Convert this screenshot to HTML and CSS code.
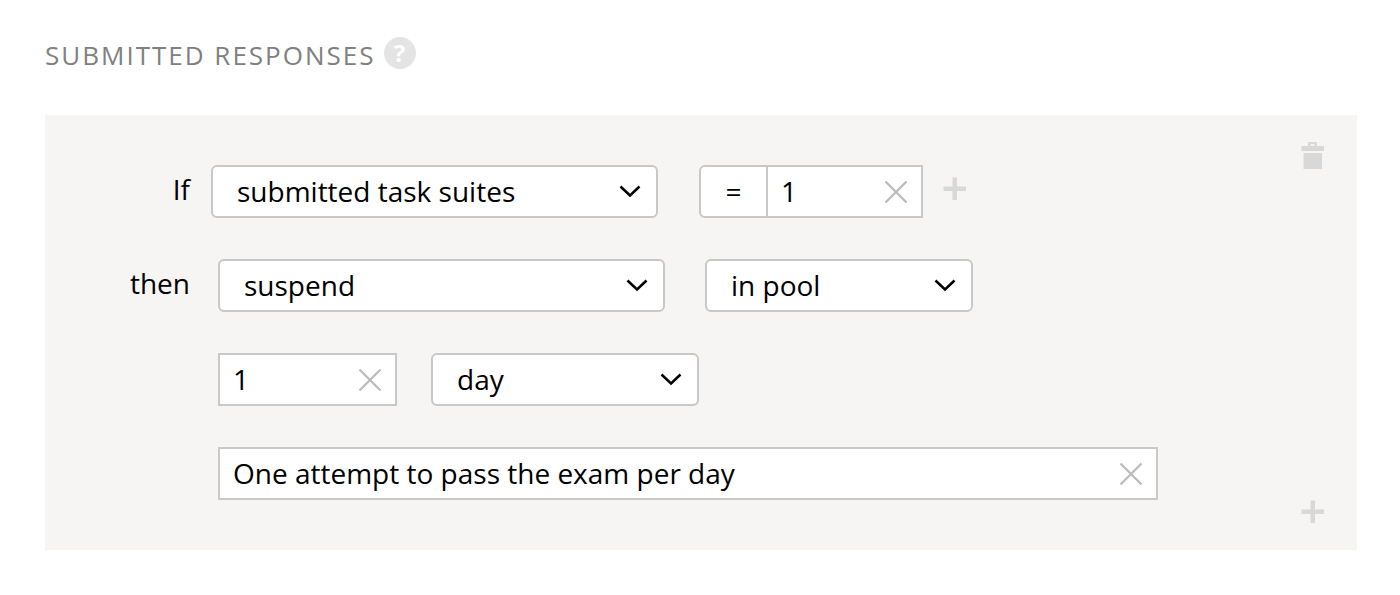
FILE: index.html
```html
<!DOCTYPE html>
<html lang="en">
<head>
<meta charset="utf-8">
<meta name="viewport" content="width=device-width, initial-scale=1">
<title>Submitted responses</title>
<link rel="stylesheet" href="styles.css">
</head>
<body>
<svg class="sprite" aria-hidden="true">
  <symbol id="chevron" viewBox="0 0 22 14"><path d="M1.500 2.500 11 11.500 20.500 2.500" fill="none" stroke="#000" stroke-width="2.500"/></symbol>
  <symbol id="cross" viewBox="0 0 24 24"><path d="M1.500 1.500 22.500 22.500M22.500 1.500 1.500 22.500" fill="none" stroke="#bababa" stroke-width="2.200"/></symbol>
  <symbol id="plus" viewBox="0 0 24 24"><path d="M9.500 .5h4.500v9h9v4.500h-9v9h-4.500v-9h-9v-4.500h9z" fill="#d8d8d8"/></symbol>
</svg>
<main class="page">
  <header class="heading">
    <h1 class="title">SUBMITTED RESPONSES</h1>
    <button class="help" type="button" aria-label="Help">?</button>
  </header>
  <form class="panel">
    <div class="rows">
      <div class="row row-if">
        <label class="label" for="condition">If</label>
        <div class="control wide">
          <select class="select" id="condition"><option>submitted task suites</option></select>
          <svg class="chevron"><use href="#chevron"/></svg>
        </div>
        <div class="group">
          <button class="operator" type="button">=</button>
          <div class="control amount">
            <input class="input" type="text" value="1" aria-label="Task suites count">
            <button class="clear" type="button" aria-label="Clear"><svg class="icon"><use href="#cross"/></svg></button>
          </div>
        </div>
        <button class="tool add-condition" type="button" aria-label="Add condition"><svg class="icon"><use href="#plus"/></svg></button>
      </div>
      <div class="row">
        <label class="label" for="action">then</label>
        <div class="control wide">
          <select class="select" id="action"><option>suspend</option></select>
          <svg class="chevron"><use href="#chevron"/></svg>
        </div>
        <div class="control narrow">
          <select class="select" aria-label="Scope"><option>in pool</option></select>
          <svg class="chevron"><use href="#chevron"/></svg>
        </div>
      </div>
      <div class="row row-indent row-duration">
        <div class="control duration">
          <input class="input" type="text" value="1" aria-label="Duration">
          <button class="clear" type="button" aria-label="Clear"><svg class="icon"><use href="#cross"/></svg></button>
        </div>
        <div class="control narrow">
          <select class="select" aria-label="Duration unit"><option>day</option></select>
          <svg class="chevron"><use href="#chevron"/></svg>
        </div>
      </div>
      <div class="row row-indent">
        <div class="control reason">
          <input class="input" type="text" value="One attempt to pass the exam per day" aria-label="Reason">
          <button class="clear" type="button" aria-label="Clear"><svg class="icon"><use href="#cross"/></svg></button>
        </div>
      </div>
    </div>
    <div class="tools">
      <button class="tool" type="button" aria-label="Delete rule"><svg class="trash" viewBox="0 0 24 28"><path d="M7 5V1h9v4h7v5H.5V5zM9.500 3v2h4V3z" fill="#d8d8d8" fill-rule="evenodd"/><path d="M2.500 12h18.500v16H2.500z" fill="#d8d8d8"/></svg></button>
      <button class="tool" type="button" aria-label="Add action"><svg class="icon"><use href="#plus"/></svg></button>
    </div>
  </form>
</main>
</body>
</html>
```
FILE: styles.css
```css
* {
  box-sizing: border-box;
}

body {
  margin: 0;
  background: #fff;
  color: #000;
  font: 28px/36px "Open Sans", "Noto Sans", sans-serif;
}

.sprite {
  position: absolute;
  width: 0;
  height: 0;
}

.page {
  padding: 37px 43px 45px 45px;
}

.heading {
  display: flex;
  align-items: flex-start;
  justify-content: flex-start;
  gap: 8px;
  margin-bottom: 42px;
}

.title {
  margin: 0;
  color: #808080;
  font-size: 26px;
  font-weight: 400;
  letter-spacing: 2px;
}

button {
  padding: 0;
  border: 0;
  background: none;
  color: inherit;
  font: inherit;
  cursor: pointer;
}

.help {
  width: 32px;
  height: 32px;
  border-radius: 50%;
  background: #e4e4e4;
  color: #fff;
  font-size: 24px;
  font-weight: 700;
  line-height: 32px;
}

.panel {
  display: flex;
  justify-content: space-between;
  padding: 26px 32px 26px 0;
  background: #f6f5f3;
}

.rows {
  display: grid;
  flex: 1;
  gap: 41px;
  padding: 24px 0;
}

.row {
  display: flex;
  align-items: center;
  gap: 40px;
}

.row-if {
  gap: 41px;
}

.row-indent {
  padding-left: 173px;
}

.row-duration {
  gap: 34px;
}

.label {
  width: 145px;
  margin-right: -12px;
  padding-bottom: 6px;
  text-align: right;
}

.row-if .label {
  margin-right: -20px;
}

.control {
  position: relative;
}

.wide {
  width: 447px;
}

.narrow {
  width: 268px;
}

.amount {
  width: 157px;
  margin-left: -2px;
}

.duration {
  width: 179px;
}

.reason {
  flex: 1;
  max-width: 940px;
}

.select,
.input,
.operator {
  display: block;
  height: 53px;
  border: 2px solid #c8c8c8;
  background: #fff;
  color: #000;
  font: inherit;
}

.select,
.input {
  width: 100%;
  margin: 0;
}

.select {
  padding: 0 56px 2px 24px;
  border-radius: 6px;
  appearance: none;
}

.input {
  padding: 0 48px 2px 13px;
  border-radius: 0;
}

.group {
  display: flex;
}

.operator {
  width: 69px;
  padding-bottom: 2px;
  border-radius: 6px 0 0 6px;
  font-weight: 500;
}

.chevron {
  position: absolute;
  top: 19px;
  right: 17px;
  width: 22px;
  height: 14px;
  pointer-events: none;
}

.clear {
  position: absolute;
  top: 15px;
  right: 15px;
  width: 24px;
  height: 24px;
}

.icon,
.trash {
  display: block;
  width: 24px;
  height: 24px;
}

.trash {
  height: 28px;
}

.add-condition {
  margin-left: -21px;
  padding-bottom: 6px;
}

.tools {
  display: flex;
  flex-direction: column;
  justify-content: space-between;
}
```
